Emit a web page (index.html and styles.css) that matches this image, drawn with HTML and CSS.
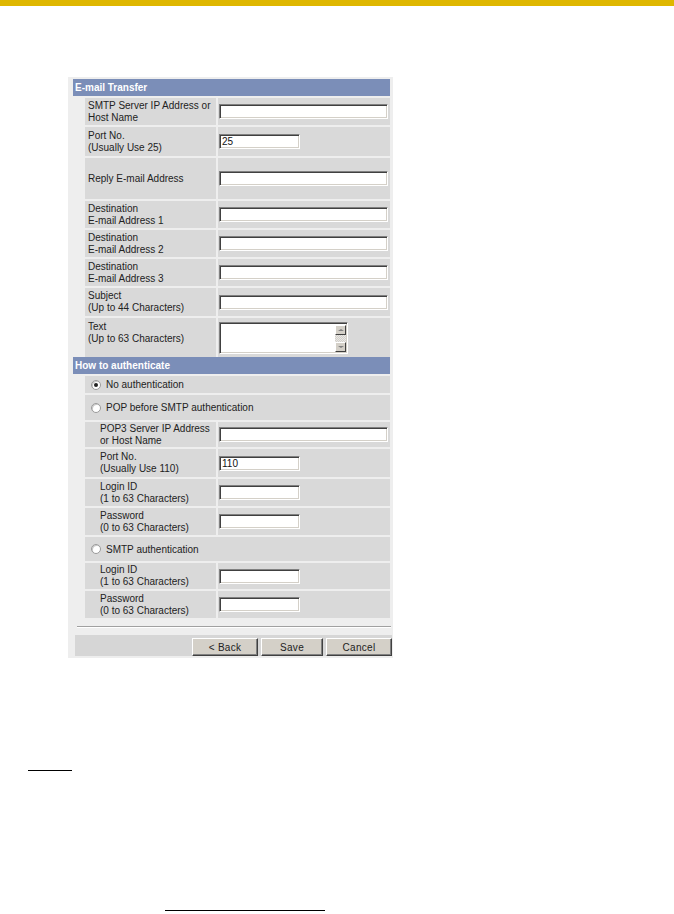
FILE: index.html
```html
<!DOCTYPE html>
<html>
<head>
<meta charset="utf-8">
<link rel="stylesheet" href="styles.css">
</head>
<body>
<div class="topbar"></div>
<div class="page">
  <div class="panel">
    <div class="sect">E-mail Transfer</div>

    <div class="row h27">
      <div class="lab">SMTP Server IP Address or<br>Host Name</div>
      <div class="fld"><div class="inp long"></div></div>
    </div>
    <div class="row h29">
      <div class="lab">Port No.<br>(Usually Use 25)</div>
      <div class="fld"><div class="inp short">25</div></div>
    </div>
    <div class="row h41">
      <div class="lab">Reply E-mail Address</div>
      <div class="fld"><div class="inp long"></div></div>
    </div>
    <div class="row h27">
      <div class="lab">Destination<br>E-mail Address 1</div>
      <div class="fld"><div class="inp long"></div></div>
    </div>
    <div class="row h27">
      <div class="lab">Destination<br>E-mail Address 2</div>
      <div class="fld"><div class="inp long"></div></div>
    </div>
    <div class="row h27">
      <div class="lab">Destination<br>E-mail Address 3</div>
      <div class="fld"><div class="inp long"></div></div>
    </div>
    <div class="row h28">
      <div class="lab">Subject<br>(Up to 44 Characters)</div>
      <div class="fld"><div class="inp long"></div></div>
    </div>
    <div class="row h39">
      <div class="lab top">Text<br>(Up to 63 Characters)</div>
      <div class="fld">
        <div class="area">
          <div class="sb">
            <div class="sbbtn"><span class="tri up"></span></div>
            <div class="sbtrack"></div>
            <div class="sbbtn"><span class="tri dn"></span></div>
          </div>
        </div>
      </div>
    </div>

    <div class="sect">How to authenticate</div>

    <div class="row h17">
      <div class="opt"><span class="radio on"></span>No authentication</div>
    </div>
    <div class="row h25">
      <div class="opt"><span class="radio"></span>POP before SMTP authentication</div>
    </div>
    <div class="row h25">
      <div class="lab sub">POP3 Server IP Address<br>or Host Name</div>
      <div class="fld"><div class="inp long"></div></div>
    </div>
    <div class="row h28">
      <div class="lab sub">Port No.<br>(Usually Use 110)</div>
      <div class="fld"><div class="inp short">110</div></div>
    </div>
    <div class="row h27">
      <div class="lab sub">Login ID<br>(1 to 63 Characters)</div>
      <div class="fld"><div class="inp short"></div></div>
    </div>
    <div class="row h27">
      <div class="lab sub">Password<br>(0 to 63 Characters)</div>
      <div class="fld"><div class="inp short"></div></div>
    </div>
    <div class="row h24">
      <div class="opt"><span class="radio"></span>SMTP authentication</div>
    </div>
    <div class="row h26">
      <div class="lab sub">Login ID<br>(1 to 63 Characters)</div>
      <div class="fld"><div class="inp short"></div></div>
    </div>
    <div class="row h27">
      <div class="lab sub">Password<br>(0 to 63 Characters)</div>
      <div class="fld"><div class="inp short"></div></div>
    </div>

    <div class="rule"></div>
    <div class="bar">
      <div class="btn b66">&lt; Back</div>
      <div class="btn b62">Save</div>
      <div class="btn b66">Cancel</div>
    </div>
  </div>

  <div class="note-line"></div>
  <div class="foot-line"></div>
</div>
</body>
</html>
```

FILE: styles.css
```css
html, body {
  margin: 0;
  padding: 0;
  background: #ffffff;
}
body {
  font-family: "Liberation Sans", Arial, sans-serif;
  font-size: 10px;
  color: #222222;
}
.topbar {
  height: 6px;
  background: #dfb700;
}
.page {
  padding-left: 68px;
}
.panel {
  margin-top: 71px;
  width: 325px;
  box-sizing: border-box;
  background: #eeeeee;
  padding: 2px 3px 2px 5px;
}
.sect {
  height: 17px;
  line-height: 17px;
  background: #7b8eb8;
  color: #ffffff;
  font-weight: bold;
  padding-left: 2px;
  white-space: nowrap;
}
.row {
  display: flex;
  margin-top: 2px;
  padding-left: 12px;
}
.h17 { height: 17px; }
.h24 { height: 24px; }
.h25 { height: 25px; }
.h26 { height: 26px; }
.h27 { height: 27px; }
.h28 { height: 28px; }
.h29 { height: 29px; }
.h39 { height: 39px; }
.h41 { height: 41px; }
.lab {
  width: 131px;
  flex: none;
  box-sizing: border-box;
  background: #d9d9d9;
  padding: 0 0 0 3px;
  line-height: 12px;
  display: flex;
  align-items: center;
  white-space: nowrap;
  overflow: hidden;
}
.lab.top {
  align-items: flex-start;
  padding-top: 3px;
}
.lab.sub {
  padding-left: 15px;
}
.fld {
  flex: 1;
  margin-left: 2px;
  background: #d9d9d9;
  display: flex;
  align-items: center;
  padding-left: 1px;
}
.opt {
  flex: 1;
  background: #d9d9d9;
  display: flex;
  align-items: center;
  padding-left: 6px;
  white-space: nowrap;
}
.radio {
  width: 8px;
  height: 8px;
  border-radius: 50%;
  background: #ffffff;
  border: 1px solid #9a9a9a;
  box-shadow: inset 1px 1px 0 #c8c8c8;
  margin-right: 5px;
  position: relative;
}
.radio.on::after {
  content: "";
  position: absolute;
  left: 2px;
  top: 2px;
  width: 4px;
  height: 4px;
  border-radius: 50%;
  background: #222222;
}
.inp {
  height: 15px;
  box-sizing: border-box;
  background: #ffffff;
  border-top: 1px solid #808080;
  border-left: 1px solid #808080;
  border-right: 1px solid #ffffff;
  border-bottom: 1px solid #ffffff;
  box-shadow: inset 1px 1px 0 #404040, inset -1px -1px 0 #d4d0c8;
  padding-left: 2px;
  line-height: 13px;
  font-size: 10px;
  color: #111111;
}
.inp.long { width: 169px; }
.inp.short { width: 81px; }
.area {
  width: 129px;
  height: 32px;
  box-sizing: border-box;
  background: #ffffff;
  border-top: 1px solid #808080;
  border-left: 1px solid #808080;
  border-right: 1px solid #ffffff;
  border-bottom: 1px solid #ffffff;
  box-shadow: inset 1px 1px 0 #404040, inset -1px -1px 0 #d4d0c8;
  display: flex;
  justify-content: flex-end;
  padding: 2px 1px 1px 2px;
}
.sb {
  width: 11px;
  display: flex;
  flex-direction: column;
}
.sbbtn {
  height: 10px;
  box-sizing: border-box;
  background: #d4d0c8;
  border-top: 1px solid #ffffff;
  border-left: 1px solid #ffffff;
  border-right: 1px solid #404040;
  border-bottom: 1px solid #404040;
  display: flex;
  align-items: center;
  justify-content: center;
}
.sbtrack {
  flex: 1;
  background-color: #e8e8e8;
  background-image: linear-gradient(45deg, #d4d0c8 25%, transparent 25%, transparent 75%, #d4d0c8 75%), linear-gradient(45deg, #d4d0c8 25%, transparent 25%, transparent 75%, #d4d0c8 75%);
  background-size: 2px 2px;
  background-position: 0 0, 1px 1px;
}
.tri {
  width: 0;
  height: 0;
  border-left: 3px solid transparent;
  border-right: 3px solid transparent;
}
.tri.up { border-bottom: 2px solid #808080; }
.tri.dn { border-top: 2px solid #808080; }
.rule {
  margin: 8px -1px 0 4px;
  height: 1px;
  background: #a0a0a0;
  border-bottom: 1px solid #ffffff;
}
.bar {
  margin: 7px -2px 0 2px;
  height: 21px;
  background: #d6d6d6;
  display: flex;
  justify-content: flex-end;
  align-items: flex-end;
  gap: 3px;
}
.btn {
  height: 18px;
  box-sizing: border-box;
  background: #d4d0c8;
  border-top: 1px solid #ffffff;
  border-left: 1px solid #ffffff;
  border-right: 1px solid #404040;
  border-bottom: 1px solid #404040;
  box-shadow: inset -1px -1px 0 #808080;
  display: flex;
  align-items: center;
  justify-content: center;
  font-size: 10px;
  color: #222222;
  letter-spacing: 0.3px;
}
.b66 { width: 66px; }
.b62 { width: 62px; }
.note-line {
  margin-top: 112px;
  margin-left: -40px;
  width: 44px;
  height: 1px;
  background: #000000;
}
.foot-line {
  margin-top: 139px;
  margin-left: 97px;
  width: 160px;
  height: 1px;
  background: #000000;
}
```
